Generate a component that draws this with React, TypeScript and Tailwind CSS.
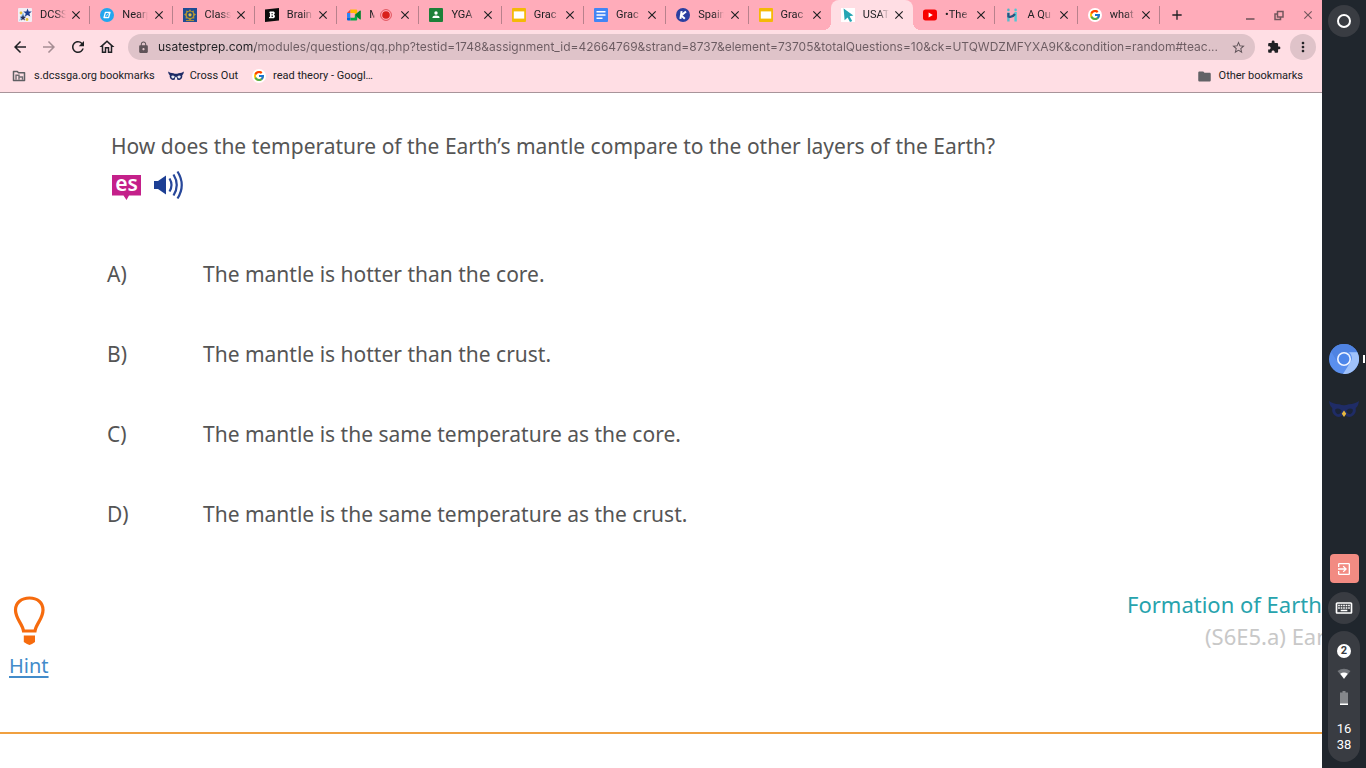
import React from "react";
import {
  MdAdd,
  MdArrowBack,
  MdArrowForward,
  MdClose,
  MdExitToApp,
  MdExtension,
  MdFolder,
  MdLock,
  MdMoreVert,
  MdOutlineHome,
  MdOutlineKeyboard,
  MdRefresh,
  MdStarBorder,
} from "react-icons/md";
import { FcGoogle } from "react-icons/fc";

const icon = "block h-[14px] w-[14px] shrink-0";

const StarsIcon = () => (
  <svg viewBox="0 0 14 14" className={icon}>
    <rect width="14" height="14" rx="1" fill="#f3eef5" />
    <path d="M1 13 L5 4 L7 9 Z" fill="#8ec4ee" />
    <path d="M9.5 0.5 L10.7 3.4 L13.8 3.6 L11.4 5.6 L12.2 8.6 L9.5 7 L6.9 8.6 L7.7 5.6 L5.3 3.6 L8.4 3.4Z" fill="#1d3f8f" />
    <path d="M5 6.5 L5.8 8.7 L8.2 8.8 L6.3 10.3 L7 12.6 L5 11.3 L3 12.6 L3.7 10.3 L1.8 8.8 L4.2 8.7Z" fill="#2a2f55" />
    <circle cx="3" cy="5" r="1.4" fill="#e9c33c" />
    <circle cx="9" cy="11.5" r="1.4" fill="#e9c33c" />
  </svg>
);

const NearpodIcon = () => (
  <svg viewBox="0 0 14 14" className={icon}>
    <circle cx="7" cy="7" r="7" fill="#22a6ee" />
    <path d="M5.4 4.4 H10 L8.6 9.6 H4Z" fill="none" stroke="#fff" strokeWidth="1.3" strokeLinejoin="round" />
    <path d="M5.4 9.2 L9 4.8" stroke="#fff" strokeWidth="0.6" />
  </svg>
);

const ClassIcon = () => (
  <svg viewBox="0 0 14 14" className={icon}>
    <rect width="14" height="14" fill="#1e4c94" />
    <path d="M7 1.2 L8.4 3.2 L10.8 2.6 L10.9 5 L13 6.4 L11.2 8 L11.4 10.4 L9 10.6 L7 12.6 L5 10.6 L2.6 10.4 L2.8 8 L1 6.4 L3.1 5 L3.2 2.6 L5.6 3.2Z" fill="#b9952f" />
    <circle cx="7" cy="6.8" r="3.2" fill="#284f7f" />
    <circle cx="7" cy="6.8" r="1.6" fill="#e5c044" />
    <path d="M3 12.6 H11" stroke="#b9952f" />
  </svg>
);

const BrainlyIcon = () => (
  <svg viewBox="0 0 14 14" className={icon}>
    <path d="M0 1.5 L14 0 V12.5 L0 14Z" fill="#0b0b0b" />
    <path d="M4.8 3.6 H8 C10.2 3.5 10.2 6.2 8.8 6.7 C10.6 7.2 10.3 10.2 8 10.3 H4 V9 H4.9 V5 H4.2Z M6.6 5 V6.2 H7.6 V5Z M6.6 7.6 V9 H7.8 V7.6Z" fill="#fff" fillRule="evenodd" />
  </svg>
);

const MeetIcon = () => (
  <svg viewBox="0 0 14 14" className={icon}>
    <path d="M0 5 L3.5 1.5 V5Z" fill="#ea4335" />
    <path d="M0 5 H3.5 V9.5 H0Z" fill="#2684fc" />
    <path d="M0 9.5 H3.5 V12.6 H1 Q0 12.6 0 11.6Z" fill="#0066da" />
    <path d="M3.5 1.5 H9.2 Q10.2 1.5 10.2 2.5 V5.5 L7.6 7 V5 H3.5Z" fill="#ffba00" />
    <path d="M3.5 9.5 H7.6 V7 L10.2 8.8 V11.6 Q10.2 12.6 9.2 12.6 H3.5Z" fill="#00ac47" />
    <path d="M7.6 7 L13 2.6 Q13.8 2.2 13.8 3.2 V11 Q13.8 11.8 13 11.4Z" fill="#00832d" />
    <rect x="3.5" y="5" width="4.1" height="4.5" fill="#ffadba" />
  </svg>
);

const ClassroomIcon = () => (
  <svg viewBox="0 0 14 14" className={icon}>
    <rect width="14" height="14" rx="1" fill="#1d8038" />
    <circle cx="7" cy="5" r="1.7" fill="#fff" />
    <path d="M3.4 10 Q3.6 7.6 7 7.6 Q10.4 7.6 10.6 10Z" fill="#fff" />
  </svg>
);

const SlidesIcon = () => (
  <svg viewBox="0 0 14 14" className={icon}>
    <rect width="14" height="14" rx="1" fill="#f4b907" />
    <rect x="1.8" y="3.4" width="10.4" height="7.2" fill="#fff" />
  </svg>
);

const DocsIcon = () => (
  <svg viewBox="0 0 14 14" className={icon}>
    <rect width="14" height="14" rx="1" fill="#4285f4" />
    <path d="M2.5 3.7 H11.5 M2.5 7 H11.5 M2.5 10.3 H8.5" stroke="#fff" strokeWidth="1.4" />
  </svg>
);

const KahootIcon = () => (
  <svg viewBox="0 0 14 14" className={icon}>
    <circle cx="7" cy="7" r="7" fill="#2b3fa0" />
    <path d="M5.6 3.2 L4.4 10.8 M10 3.4 L5.2 7.4 L8.8 10.8" fill="none" stroke="#fff" strokeWidth="2" />
  </svg>
);

const ArrowIcon = () => (
  <svg viewBox="0 0 14 14" className={icon}>
    <rect width="14" height="14" fill="#fff" />
    <path d="M2.6 0.4 L12.4 7.6 L8.6 8.2 L11.2 13 L9 14 L6.6 9.4 L3.6 12.2Z" fill="#25a5b3" />
  </svg>
);

const YoutubeIcon = () => (
  <svg viewBox="0 0 14 14" className={icon}>
    <rect y="1.6" width="14" height="10.8" rx="2.6" fill="#f80000" />
    <path d="M5.6 4.6 L9.8 7 L5.6 9.4Z" fill="#fff" />
  </svg>
);

const HIcon = () => (
  <svg viewBox="0 0 14 14" className={icon}>
    <path d="M3.4 4.4 V13.5" stroke="#5bbccb" strokeWidth="2.4" />
    <path d="M10.6 4 V13.5" stroke="#4fc9d6" strokeWidth="2.4" />
    <path d="M3.4 5 V8.5 Q7 10 10 6" fill="none" stroke="#26537f" strokeWidth="2.2" />
    <circle cx="3.4" cy="1.9" r="1.3" fill="#4fb4c6" />
    <circle cx="10.6" cy="1.9" r="1.3" fill="#4fc9d6" />
  </svg>
);

const GoogleIcon = () => (
  <span className="flex h-[14px] w-[14px] shrink-0 items-center justify-center rounded-full bg-white">
    <FcGoogle size={12} />
  </span>
);

const OwlIcon = ({ className, face, beak }: { className: string; face: string; beak: string }) => (
  <svg viewBox="0 0 32 20" className={className}>
    <path
      d="M0 1 Q4 4 11 4.5 Q16 6.5 21 4.5 Q28 4 32 1 Q31 7 28.5 8.5 Q29.5 15 24 17.5 Q19 19 16 15 Q13 19 8 17.5 Q2.5 15 3.5 8.5 Q1 7 0 1Z"
      fill="#1f2c66"
    />
    <path
      d="M6.5 10 Q10 7.5 13.5 11 Q12.5 15 9.5 15 Q6.5 14 6.5 10Z M25.5 10 Q22 7.5 18.5 11 Q19.5 15 22.5 15 Q25.5 14 25.5 10Z"
      fill={face}
    />
    <path d="M16 11 L18.4 14.5 L16 18 L13.6 14.5Z" fill={beak} />
  </svg>
);

type Tab = { title: string; Icon: () => React.ReactElement; active?: boolean; noDivider?: boolean; recording?: boolean };

const tabs: Tab[] = [
  { title: "DCSS", Icon: StarsIcon },
  { title: "Nearp", Icon: NearpodIcon },
  { title: "Class", Icon: ClassIcon },
  { title: "Brain", Icon: BrainlyIcon },
  { title: "M", Icon: MeetIcon, recording: true },
  { title: "YGA", Icon: ClassroomIcon },
  { title: "Grac", Icon: SlidesIcon },
  { title: "Grac", Icon: DocsIcon },
  { title: "Spain", Icon: KahootIcon },
  { title: "Grac", Icon: SlidesIcon, noDivider: true },
  { title: "USAT", Icon: ArrowIcon, active: true, noDivider: true },
  { title: "•The", Icon: YoutubeIcon },
  { title: "A Qu", Icon: HIcon },
  { title: "what", Icon: GoogleIcon },
];

function TabItem({ title, Icon, active, noDivider, recording }: Tab) {
  return (
    <div
      role="tab"
      aria-selected={!!active}
      className={`relative flex h-[30px] min-w-0 flex-1 items-center pl-[10px] pr-[7px] ${active ? "rounded-t-lg bg-[#ffdee4]" : ""}`}
    >
      <Icon />
      <span
        className={`ml-2 overflow-hidden whitespace-nowrap text-[11px] leading-[14px] [mask-image:linear-gradient(to_right,black_60%,transparent)] ${recording ? "w-[6px]" : "w-[26px]"}`}
      >
        {title}
      </span>
      {recording && (
        <svg viewBox="0 0 12 12" className="ml-[5px] h-3 w-3 shrink-0">
          <circle cx="6" cy="6" r="5.4" fill="none" stroke="#e0525a" />
          <circle cx="6" cy="6" r="3.8" fill="#d8201c" />
        </svg>
      )}
      <button aria-label={`Close ${title}`} className="ml-auto flex h-[14px] w-[14px] items-center justify-center">
        <MdClose size={14} className="shrink-0" />
      </button>
      {!noDivider && <span className="absolute right-0 top-[6px] h-[18px] w-px bg-[#b8818c]" />}
      {active && (
        <>
          <span className="absolute -left-2 bottom-0 h-2 w-2 bg-[radial-gradient(circle_at_0_0,transparent_8px,#ffdee4_8px)]" />
          <span className="absolute -right-2 bottom-0 h-2 w-2 bg-[radial-gradient(circle_at_100%_0,transparent_8px,#ffdee4_8px)]" />
        </>
      )}
    </div>
  );
}

function BrowserChrome() {
  return (
    <header className="border-b border-[#a8949a] bg-[#ffdee4] font-[Roboto,sans-serif] text-[#202124]">
      <div className="flex h-[30px] items-center bg-[#ffacba] pl-2 pr-[7px]">
        <div role="tablist" className="flex max-w-[1152px] flex-1">
          {tabs.map((tab, i) => (
            <TabItem key={i} {...tab} />
          ))}
        </div>
        <button aria-label="New tab" className="ml-[9px] flex h-4 w-4 items-center justify-center">
          <MdAdd size={16} className="shrink-0" />
        </button>
        <div className="ml-auto flex items-center gap-[15px] text-[#74575e]">
          <button aria-label="Minimize" className="flex h-[14px] w-[14px] items-center justify-center">
            <svg viewBox="0 0 12 12" className="h-3 w-3">
              <path d="M2 10 H10.5" stroke="currentColor" strokeWidth="1.6" />
            </svg>
          </button>
          <button aria-label="Restore" className="flex h-[14px] w-[14px] items-center justify-center">
            <svg viewBox="0 0 12 12" className="h-3 w-3" fill="none" stroke="currentColor" strokeWidth="1.5">
              <rect x="4.5" y="2.5" width="5.5" height="5.5" />
              <path d="M4.500 5 H2 V10.5 H7.500 V8" />
            </svg>
          </button>
          <button aria-label="Close window" className="flex h-[14px] w-[14px] items-center justify-center">
            <MdClose size={14} className="shrink-0" />
          </button>
        </div>
      </div>

      <div className="flex h-[34px] items-center pl-[11px] pr-[6px]">
        <div className="flex gap-[11px]">
          <button aria-label="Back"><MdArrowBack size={18} /></button>
          <button aria-label="Forward" className="text-[#a68d93]"><MdArrowForward size={18} /></button>
          <button aria-label="Reload"><MdRefresh size={18} /></button>
          <button aria-label="Home"><MdOutlineHome size={18} /></button>
        </div>
        <div className="ml-3 flex h-[26px] min-w-0 flex-1 items-center rounded-full bg-[#dfc3c9] pl-[9px] pr-[9px]">
          <MdLock size={13} className="shrink-0 text-[#5f5358]" />
          <input
            aria-label="Address"
            readOnly
            className="ml-2 min-w-0 flex-1 bg-[linear-gradient(to_right,#202124_97px,#6b5b61_97px)] bg-clip-text font-[Inter,sans-serif] text-[12px] leading-[18px] text-transparent outline-none"
            value="usatestprep.com/modules/questions/qq.php?testid=1748&assignment_id=42664769&strand=8737&element=73705&totalQuestions=10&ck=UTQWDZMFYXA9K&condition=random#teac..."
          />
          <button aria-label="Bookmark this page" className="text-[#5f5358]"><MdStarBorder size={15} /></button>
        </div>
        <button aria-label="Extensions" className="ml-3"><MdExtension size={14} /></button>
        <button aria-label="Menu" className="ml-[9px] flex h-[26px] w-[26px] items-center justify-center rounded-full bg-[#dfc3c9]">
          <MdMoreVert size={16} />
        </button>
      </div>

      <nav aria-label="Bookmarks" className="flex h-7 items-center pb-1 pl-3 pr-[19px] text-[11px] leading-[14px]">
        <a href="#managed" className="flex items-center gap-2">
          <svg viewBox="0 0 14 12" className="h-3 w-[14px]">
            <path d="M1.5 1.5 H5.3 L6.5 2.8 H12.5 V10.5 H1.5Z" fill="none" stroke="#5f5f63" strokeWidth="1.5" strokeLinejoin="round" />
            <path d="M4 9.8 V5.2 H7 V9.8 M7 7 H10.5 V9.8" fill="none" stroke="#6f6d71" strokeWidth="1.4" />
          </svg>
          s.dcssga.org bookmarks
        </a>
        <a href="#cross-out" className="ml-[13px] flex items-center gap-[6px]">
          <OwlIcon className="h-[10px] w-4" face="#e4e6ef" beak="#ffffff" />
          Cross Out
        </a>
        <a href="#read-theory" className="ml-[14px] flex items-center gap-[7px]">
          <GoogleIcon />
          read theory - Googl…
        </a>
        <a href="#other" className="ml-auto flex items-center gap-[7px]">
          <MdFolder size={15} className="text-[#626266]" />
          Other bookmarks
        </a>
      </nav>
    </header>
  );
}

const answers = [
  ["A)", "The mantle is hotter than the core."],
  ["B)", "The mantle is hotter than the crust."],
  ["C)", "The mantle is the same temperature as the core."],
  ["D)", "The mantle is the same temperature as the crust."],
];

function Question() {
  return (
    <main className="flex-1 overflow-hidden bg-white font-['Noto_Sans',sans-serif] text-[21px] leading-8 text-[#555]">
      <h1 className="whitespace-nowrap pl-[111px] pt-[37px]">
        How does the temperature of the Earth’s mantle compare to the other layers of the Earth?
      </h1>
      <div className="flex items-center gap-3 pl-[111px] pt-2">
        <button aria-label="Español">
          <svg viewBox="0 0 30 30" className="h-[30px] w-[30px]">
            <path d="M1 5 H30 V25.500 H18 L15.5 30 L12.500 25.500 H1Z" fill="#c4208a" />
            <text x="15.500" y="21" textAnchor="middle" fontFamily="Noto Sans, sans-serif" fontWeight="600" fontSize="21" fill="#fff">es</text>
          </svg>
        </button>
        <button aria-label="Listen">
          <svg viewBox="0 0 31 30" className="h-[30px] w-[31px]">
            <path d="M1 11 H5 L13 5.5 V24.5 L5 19 H1Z" fill="#1d3f94" />
            <path d="M16.5 8.5 Q20.5 15 16.5 21.5 M20.5 4.5 Q27 15 20.5 25.5 M24.5 1.5 Q33 15 24.5 28.5" fill="none" stroke="#27479a" strokeWidth="2.2" />
          </svg>
        </button>
      </div>

      <div className="flex flex-col gap-12 pl-[107px] pt-[58px]">
        {answers.map(([letter, text]) => (
          <button key={letter} className="flex text-left">
            <span className="w-24 shrink-0">{letter}</span>
            <span className="whitespace-nowrap">{text}</span>
          </button>
        ))}
      </div>

      <div className="flex items-start justify-between pt-[58px]">
        <a href="#hint" className="flex flex-col items-center pl-[9px] pt-2 text-[20px] text-[#428bca] underline underline-offset-3">
          <svg viewBox="0 0 34 50" className="h-[50px] w-[34px]">
            <path d="M11.5 35 C10.5 27.5 3.5 23 3.5 14 C3.5 6.5 9.5 2 17.5 2 C25.5 2 31 6.5 31 14 C31 23 24 27.5 23 35Z" fill="none" stroke="#f66b0e" strokeWidth="3.2" />
            <path d="M11.8 39.5 H23 V46 L20 48 L17.5 49 L15 48 L11.8 46Z" fill="#f66b0e" />
          </svg>
          <span className="pt-1">Hint</span>
        </a>
        <div className="flex flex-col items-end whitespace-nowrap text-[22px]">
          <p className="w-[195px] text-[#27a3ad]">Formation of Earth</p>
          <p className="w-[117px] text-[#c8c8c8]">(S6E5.a) Ear</p>
        </div>
      </div>
      <hr className="mt-[50px] border-t-2 border-[#f0a040]" />
    </main>
  );
}

function Shelf() {
  return (
    <aside className="grid w-11 shrink-0 grid-rows-[1fr_auto_1fr] justify-items-center bg-[#20262d] font-[Roboto,sans-serif] text-white">
      <button aria-label="Launcher" className="mt-[5px] flex h-8 w-8 items-center justify-center rounded-full bg-[#393c42]">
        <span className="h-[14px] w-[14px] rounded-full border-2 border-white" />
      </button>
      <div className="relative flex flex-col gap-[21px]">
        <button aria-label="Chromium">
          <svg viewBox="0 0 30 30" className="h-[30px] w-[30px]">
            <circle cx="15" cy="15" r="15" fill="#5a8fee" />
            <path d="M2 7.5 A15 15 0 0 1 28.3 8.2 H15 A7 7 0 0 0 8.7 18.3Z" fill="#4f83e2" />
            <path d="M28.3 8.2 A15 15 0 0 1 14 30 L21.2 18.5 A7 7 0 0 0 20 8.2Z" fill="#9fc1fa" />
            <circle cx="15" cy="15" r="7" fill="#f0f4ff" />
            <circle cx="15" cy="15" r="5.4" fill="#4d86ea" />
          </svg>
        </button>
        <button aria-label="Owl" className="flex h-[30px] w-[30px] items-center justify-center">
          <OwlIcon className="h-[19px] w-[30px]" face="#1b2438" beak="#e8b93e" />
        </button>
        <span className="absolute -right-[6px] top-[11px] h-2 w-[2px] bg-white" />
      </div>
      <div className="flex flex-col items-center self-end pb-[6px]">
        <button aria-label="Exit session" className="flex h-[29px] w-[29px] items-center justify-center rounded-sm bg-[#f28b82]">
          <MdExitToApp size={16} />
        </button>
        <button aria-label="Keyboard" className="mt-[9px] flex h-8 w-8 items-center justify-center rounded-full bg-[#393c42]">
          <MdOutlineKeyboard size={20} />
        </button>
        <button aria-label="Status" className="mt-[7px] flex h-[131px] w-8 flex-col items-center rounded-full bg-[#393c42] pt-[13px]">
          <span className="flex h-[14px] w-[14px] items-center justify-center rounded-full bg-white text-[11px] leading-[14px] font-bold text-[#393c42]">2</span>
          <svg viewBox="0 0 14 12" className="mt-[10px] h-3 w-[14px]">
            <path d="M0.5 3 Q7 -1.5 13.5 3 L7 11Z" fill="#74777c" />
            <path d="M3.2 5.8 Q7 3.2 10.8 5.8 L7 10.8Z" fill="#fff" />
          </svg>
          <svg viewBox="0 0 10 14" className="mt-[11px] h-[14px] w-[10px]">
            <path d="M3.5 0 H6.5 V1.5 H9 V14 H1 V1.5 H3.5Z" fill="#85878b" />
            <path d="M1 12.5 H9 V14 H1Z" fill="#fff" />
          </svg>
          <span className="mt-4 text-[13px] leading-4">16<br />38</span>
        </button>
      </div>
    </aside>
  );
}

export default function App() {
  return (
    <div className="flex min-h-screen">
      <div className="flex min-w-0 flex-1 flex-col">
        <BrowserChrome />
        <Question />
      </div>
      <Shelf />
    </div>
  );
}
